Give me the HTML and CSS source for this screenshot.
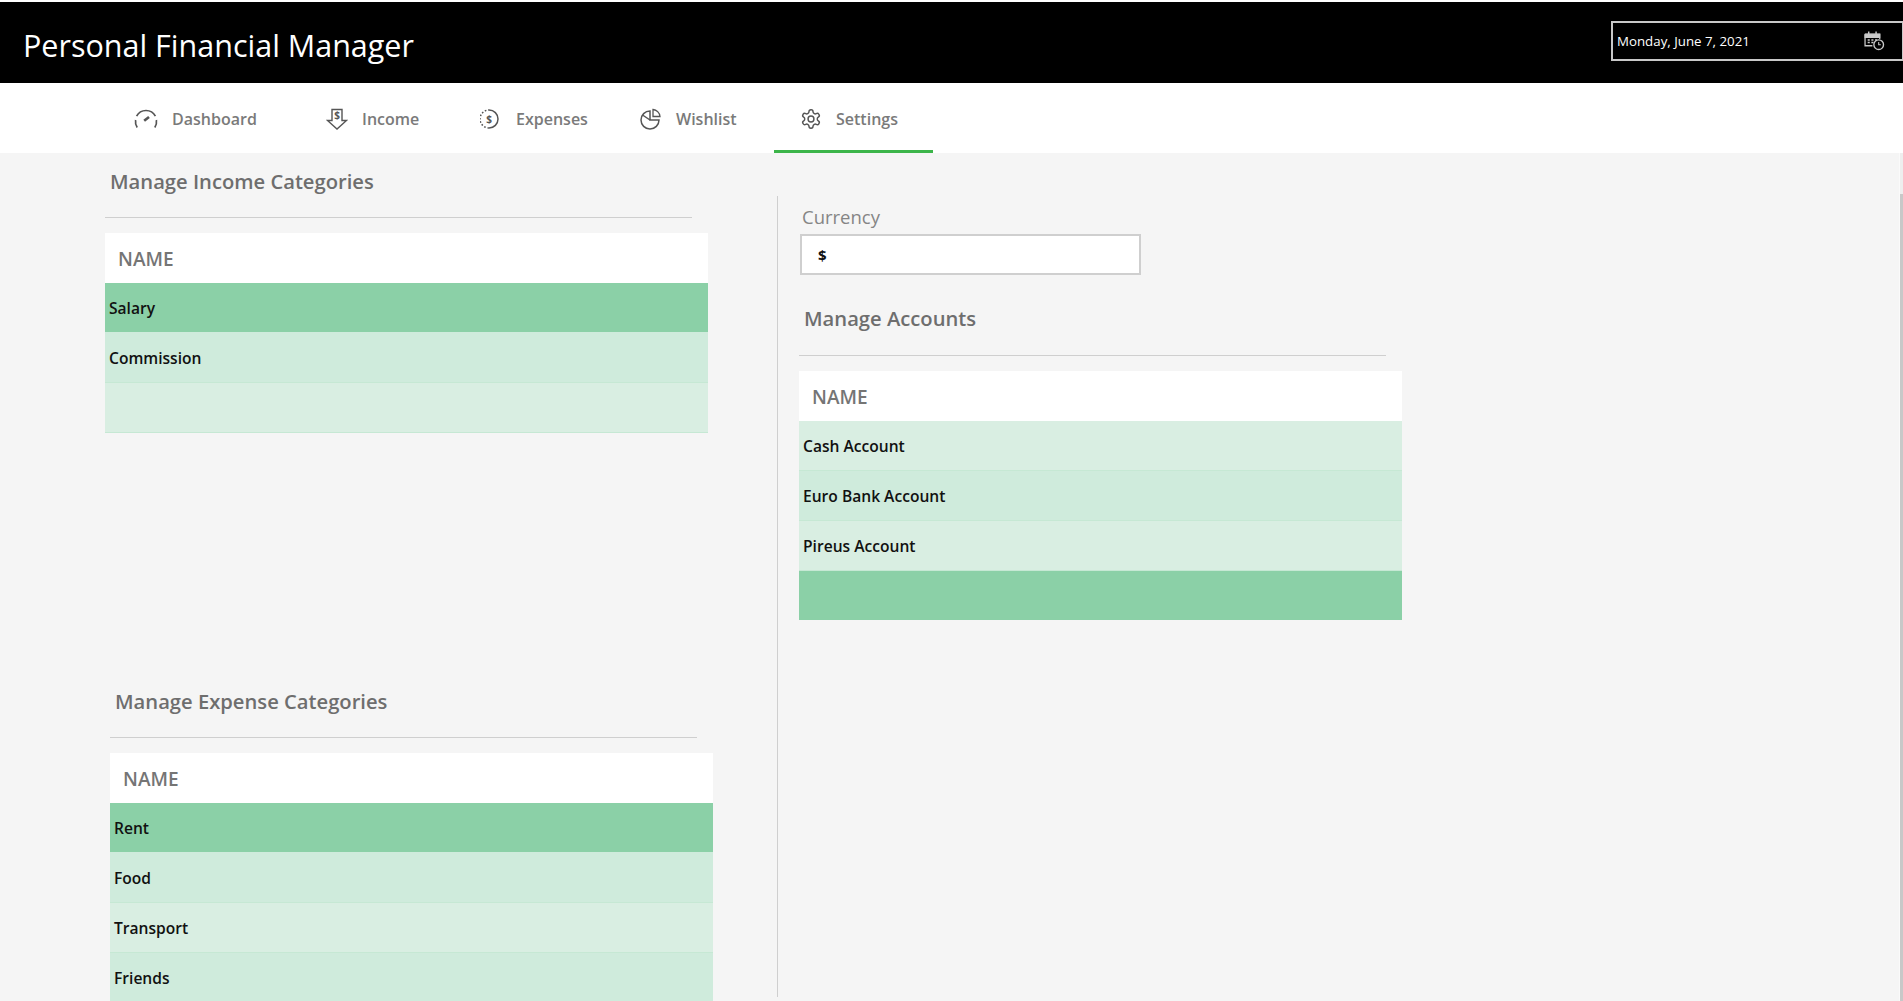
FILE: index.html

```html
<!DOCTYPE html>
<html lang="en">
<head>
    <meta charset="UTF-8">
    <title>Personal Financial Manager</title>
    <link rel="stylesheet" href="styles.css">
</head>
<body>
    <header class="topbar">
        <h1 class="app-title">Personal Financial Manager</h1>
        <div class="date-box">
            <span>Monday, June 7, 2021</span>
            <svg class="date-icon" viewBox="0 0 20 20" fill="none" stroke="#c9c9c9">
                <path d="M1 4h14v4.5M1 4v11h7" stroke-width="1.2"/>
                <path d="M1 4h14v3H1z" fill="#c9c9c9"/>
                <path d="M4.5 1.5v3M11.5 1.5v3" stroke-width="1.4"/>
                <path d="M3.5 9.5h2M7 9.5h2M10.5 9.5h2M3.5 12h2M7 12h2" stroke-width="1.4"/>
                <circle cx="14" cy="14" r="4.6" fill="#000" stroke-width="1.3"/>
                <path d="M14 11.5V14h2" stroke-width="1"/>
            </svg>
        </div>
    </header>

    <nav class="tabs">
        <a class="tab">
            <svg class="tab-icon tab-icon-wide" viewBox="0 0 24 20" fill="none" stroke="#555" stroke-width="1.7">
                <path d="M3.2 18.5A10.6 10.6 0 0 1 1.6 11"/>
                <path d="M2.6 7.2A10.6 10.6 0 0 1 21.4 7.2"/>
                <path d="M22.4 11A10.6 10.6 0 0 1 20.8 18.5"/>
                <path d="M10.2 11.8 15 8" stroke-width="2.6"/>
            </svg>
            <span>Dashboard</span>
        </a>
        <a class="tab">
            <svg class="tab-icon" viewBox="0 0 22 22" fill="none" stroke="#555" stroke-width="1.4">
                <path d="M6 1.5h10v11h4.5L11 21 1.5 12.500H6z"/>
                <text x="11" y="11" class="icon-text">$</text>
            </svg>
            <span>Income</span>
        </a>
        <a class="tab">
            <svg class="tab-icon" viewBox="0 0 22 22" fill="none" stroke="#555" stroke-width="1.5">
                <path d="M9 2a9 9 0 1 1 0 18"/>
                <path d="M9 20A9 9 0 0 1 9 2" stroke-dasharray="1.6 1.8"/>
                <text x="9" y="15" class="icon-text">$</text>
            </svg>
            <span>Expenses</span>
        </a>
        <a class="tab">
            <svg class="tab-icon" viewBox="0 0 22 22" fill="none" stroke="#555" stroke-width="1.5">
                <path d="M10 3a9 9 0 1 0 9 9h-9z"/>
                <path d="M10 12 2.500 7"/>
                <path d="M13 1.500a8 8 0 0 1 7 7h-7z" stroke-width="1.3"/>
            </svg>
            <span>Wishlist</span>
        </a>
        <a class="tab tab-active">
            <svg class="tab-icon" viewBox="0 0 24 24" fill="none" stroke="#555" stroke-width="1.6">
                <path d="M12.22 2h-.44a2 2 0 0 0-2 2v.18a2 2 0 0 1-1 1.730l-.43.25a2 2 0 0 1-2 0l-.15-.08a2 2 0 0 0-2.730.73l-.22.38a2 2 0 0 0 .73 2.730l.15.1a2 2 0 0 1 1 1.720v.51a2 2 0 0 1-1 1.740l-.15.09a2 2 0 0 0-.73 2.730l.22.38a2 2 0 0 0 2.730.73l.15-.08a2 2 0 0 1 2 0l.43.25a2 2 0 0 1 1 1.730V20a2 2 0 0 0 2 2h.44a2 2 0 0 0 2-2v-.18a2 2 0 0 1 1-1.730l.43-.25a2 2 0 0 1 2 0l.15.08a2 2 0 0 0 2.730-.73l.22-.39a2 2 0 0 0-.73-2.730l-.15-.08a2 2 0 0 1-1-1.740v-.5a2 2 0 0 1 1-1.740l.15-.09a2 2 0 0 0 .73-2.730l-.22-.38a2 2 0 0 0-2.730-.73l-.15.08a2 2 0 0 1-2 0l-.43-.25a2 2 0 0 1-1-1.730V4a2 2 0 0 0-2-2z"/>
                <circle cx="12" cy="12" r="3.200"/>
            </svg>
            <span>Settings</span>
        </a>
    </nav>

    <main class="content">
        <div class="left-col">
            <section class="panel">
                <h2 class="panel-title">Manage Income Categories</h2>
                <hr class="panel-rule">
                <div class="list">
                    <div class="list-head">NAME</div>
                    <div class="row selected">Salary</div>
                    <div class="row even">Commission</div>
                    <div class="row odd"></div>
                </div>
            </section>
            <section class="panel panel-expense">
                <h2 class="panel-title">Manage Expense Categories</h2>
                <hr class="panel-rule">
                <div class="list">
                    <div class="list-head">NAME</div>
                    <div class="row selected">Rent</div>
                    <div class="row even">Food</div>
                    <div class="row odd">Transport</div>
                    <div class="row even">Friends</div>
                </div>
            </section>
        </div>

        <div class="right-col">
            <label class="field-label" for="currency">Currency</label>
            <input class="field-input" id="currency" type="text" value="$">
            <section class="panel panel-accounts">
                <h2 class="panel-title">Manage Accounts</h2>
                <hr class="panel-rule">
                <div class="list">
                    <div class="list-head">NAME</div>
                    <div class="row odd">Cash Account</div>
                    <div class="row even">Euro Bank Account</div>
                    <div class="row odd">Pireus Account</div>
                    <div class="row selected"></div>
                </div>
            </section>
        </div>
    </main>

    <div class="scroll-track"><div class="scroll-thumb"></div></div>
</body>
</html>
```

FILE: styles.css

```css
* {
    box-sizing: border-box;
}
html, body {
    height: 100%;
}
body {
    margin: 0;
    padding-top: 2px;
    height: 1001px;
    overflow: hidden;
    background: #fff;
    font-family: "Open Sans", sans-serif;
}

/* top bar */
.topbar {
    height: 81px;
    background: #000;
    display: flex;
    align-items: center;
    justify-content: space-between;
    padding: 0 0 0 23px;
}
.app-title {
    margin: 5px 0 0;
    color: #fff;
    font-size: 30.5px;
    font-weight: 400;
}
.date-box {
    width: 292px;
    height: 40px;
    margin-bottom: 4px;
    border: 2px solid #c8c8c8;
    border-right-width: 1px;
    display: flex;
    align-items: center;
    justify-content: space-between;
    padding: 0 17px 0 4px;
    color: #fff;
    font-size: 13.3px;
}
.date-icon {
    width: 21px;
    height: 21px;
}

/* tabs */
.tabs {
    height: 70px;
    background: #fff;
    display: grid;
    grid-template-columns: 192px 154px 160px 160px 159px;
    padding-left: 108px;
}
.tab {
    display: flex;
    align-items: center;
    gap: 14px;
    padding: 2px 0 0 26px;
    color: #7a7a7a;
    font-size: 16px;
    font-weight: 600;
}
.tab-active {
    border-bottom: 3px solid #3cb54a;
    padding-top: 5px;
}
.tab-icon {
    width: 22px;
    height: 22px;
    flex: none;
}
.tab-icon-wide {
    width: 24px;
}
.icon-text {
    fill: #555;
    stroke: none;
    font-family: "Open Sans", sans-serif;
    font-size: 10px;
    font-weight: 700;
    text-anchor: middle;
}

/* main area */
.content {
    height: 848px;
    background: #f5f5f5;
    display: flex;
    align-items: flex-start;
}
.left-col {
    width: 672px;
    margin-left: 105px;
    flex: none;
}
.panel {
    width: 603px;
}
.panel-expense {
    margin-left: 5px;
    margin-top: 240px;
}
.panel-title {
    margin: 0 0 0 5px;
    height: 64px;
    padding-top: 12px;
    color: #6e6e6e;
    font-size: 20.2px;
    line-height: 32px;
    font-weight: 600;
}
.panel-rule {
    width: 587px;
    height: 1px;
    margin: 0 0 15px;
    border: 0;
    background: #cfcfcf;
}
.list-head {
    height: 50px;
    background: #fff;
    padding-left: 13px;
    color: #757575;
    font-size: 19px;
    font-weight: 600;
    line-height: 52px;
}
.row {
    height: 50px;
    padding-left: 4px;
    color: #111;
    font-size: 15.6px;
    font-weight: 600;
    line-height: 51px;
    border-bottom: 1px solid #c6e8d4;
}
.row.selected {
    height: 49px;
    background: #8bd0a7;
    border-bottom: 0;
}
.row.even {
    background: #cfebdc;
}
.row.odd {
    background: #d9eee2;
}
.row.selected + .even {
    height: 51px;
    line-height: 53px;
}

/* right column, the border is the long divider */
.right-col {
    height: 801px;
    margin-top: 43px;
    border-left: 1px solid #cfcfcf;
    padding-left: 22px;
    flex: none;
    width: 640px;
}
.field-label {
    display: block;
    height: 38px;
    padding-left: 2px;
    color: #858585;
    font-size: 18.5px;
    line-height: 42px;
}
.field-input {
    display: block;
    width: 341px;
    height: 41px;
    border: 2px solid #cfcfcf;
    background: #fff;
    padding: 0 0 0 16px;
    color: #111;
    font-family: inherit;
    font-size: 15px;
    font-weight: 700;
}
.panel-accounts .panel-title {
    margin-left: 5px;
    padding-top: 11px;
}
.panel-accounts {
    margin-left: -1px;
    margin-top: 16px;
}

/* thin scrollbar along the right edge */
.scroll-track {
    position: absolute;
    top: 153px;
    right: 0;
    bottom: 0;
    width: 4px;
    border-left: 1px solid #fafafa;
    background: #eeeeee;
    padding-top: 41px;
}
.scroll-thumb {
    height: 100%;
    background: #c8c8c8;
}
```
